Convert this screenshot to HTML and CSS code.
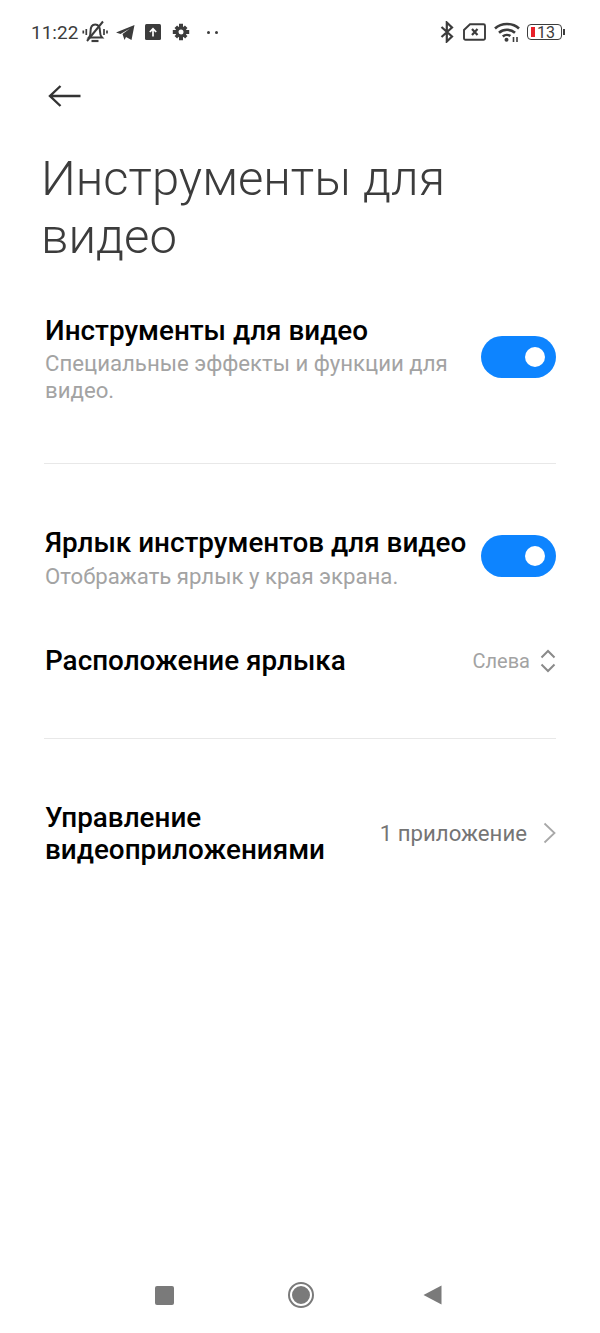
FILE: index.html
```html
<!DOCTYPE html>
<html lang="ru">
<head>
    <meta charset="UTF-8">
    <meta name="viewport" content="width=device-width, initial-scale=1.0">
    <title>Инструменты для видео</title>
    <link rel="stylesheet" href="styles.css">
</head>
<body>
    <div class="screen">
        <!-- Status bar -->
        <div class="status-bar">
            <div class="status-left">
                <span class="clock">11:22</span>
                <svg class="ic-bell" width="26" height="24" viewBox="0 0 26 24" fill="none" stroke="#3c3c3c" stroke-width="2">
                    <path d="M7 17.500c1.500-1.500 1.500-3.500 1.500-6 0-4.500 2-7 4.700-7s4.800 2.500 4.800 7c0 2.500.5 4.500 2 6z"/>
                    <path d="M9.500 21h7" stroke-width="2.200"/>
                    <path d="M5 21 21 1.500"/>
                    <path d="M4.300 9v6M1.300 10.500v3M22 9v6M25 10.500v3" stroke-width="1.700"/>
                </svg>
                <svg class="ic-telegram" width="19" height="15" viewBox="0 0 19 15">
                    <path d="M0 7.500 18.500 0 15.500 15 10 12l-1.500 3-2-6L14 3.500 4.500 9z" fill="#3c3c3c"/>
                </svg>
                <svg class="ic-upload" width="16" height="16" viewBox="0 0 16 16">
                    <rect width="16" height="16" rx="1.500" fill="#3c3c3c"/>
                    <path d="M8 12.500V5M4.800 8 8 4.800 11.200 8" fill="none" stroke="#fff" stroke-width="1.700"/>
                </svg>
                <svg class="ic-gear" width="18" height="18" viewBox="0 0 18 18">
                    <path d="M9 3.200a5.800 5.800 0 1 0 0 11.600A5.800 5.800 0 0 0 9 3.200zm0 3.300a2.500 2.500 0 1 1 0 5 2.500 2.500 0 0 1 0-5z" fill="#3c3c3c" fill-rule="evenodd"/>
                    <path d="M7 .8h4v3.500H7zM7 13.700h4v3.500H7zM.8 7h3.500v4H.8zM13.700 7h3.500v4h-3.500zM2.500 5.100l2.600-2.600 2 2-2.600 2.600zM10.900 13.100l2.200-2.200 2.400 2-2.400 2.600zM12.900 2.500l2.600 2.600-2 2-2.600-2.600zM4.900 10.900l2.200 2.200-2 2.400-2.600-2.400z" fill="#3c3c3c"/>
                </svg>
                <span class="dots"><i></i><i></i></span>
            </div>
            <div class="status-right">
                <svg class="ic-bt" width="14" height="22" viewBox="0 0 14 22" fill="none" stroke="#3c3c3c" stroke-width="2.200">
                    <path d="M1.500 6 12 15.500 6.800 20.500V1.500L12 6.500 1.500 16"/>
                </svg>
                <svg class="ic-sim" width="23" height="18" viewBox="0 0 23 18" fill="none" stroke="#3c3c3c">
                    <path d="M7 1.200h13.500a1.500 1.500 0 0 1 1.500 1.500v12.600a1.500 1.500 0 0 1-1.500 1.500H2.500A1.500 1.500 0 0 1 1 15.300V7z" stroke-width="1.900"/>
                    <path d="M9 6l5.500 6M14.500 6 9 12" stroke-width="2.200"/>
                </svg>
                <svg class="ic-wifi" width="26" height="20" viewBox="0 0 26 20" fill="none" stroke="#3c3c3c" stroke-width="2.600">
                    <path d="M1 6.500C7.500.5 18.500.5 25 6.500"/>
                    <path d="M5 10.800c4.500-4 11.500-4 16 0"/>
                    <path d="M8.800 14.500c2.300-2 5.600-2 7.600-.4"/>
                    <circle cx="12.500" cy="17.800" r="2" fill="#3c3c3c" stroke="none"/>
                    <path d="M19.500 20v-5M23 20v-5" stroke-width="1.600"/>
                </svg>
                <div class="battery">
                    <div class="battery-body"><i class="battery-level"></i><span>13</span></div>
                    <i class="battery-cap"></i>
                </div>
            </div>
        </div>

        <!-- Header -->
        <div class="back-row">
            <svg width="34" height="24" viewBox="0 0 34 24" fill="none" stroke="#333" stroke-width="2.400">
                <path d="M32.500 12H2.500M12.500 2 2 12l10.500 10"/>
            </svg>
        </div>
        <h1 class="page-title">Инструменты для видео</h1>

        <!-- Settings -->
        <div class="group group-first">
            <div class="row">
                <div class="row-text">
                    <div class="row-title">Инструменты для видео</div>
                    <div class="row-sub">Специальные эффекты и функции для видео.</div>
                </div>
                <div class="toggle"></div>
            </div>
        </div>
        <div class="divider divider-a"></div>

        <div class="group group-second">
            <div class="row">
                <div class="row-text">
                    <div class="row-title">Ярлык инструментов для видео</div>
                    <div class="row-sub">Отображать ярлык у края экрана.</div>
                </div>
                <div class="toggle"></div>
            </div>
            <div class="row row-picker">
                <div class="row-title">Расположение ярлыка</div>
                <div class="row-value">
                    <span class="value-light">Слева</span>
                    <svg width="16" height="24" viewBox="0 0 16 24" fill="none" stroke="#8a8a8a" stroke-width="2">
                        <path d="M1.500 8.500 8 2l6.500 6.500M1.500 15.500 8 22l6.500-6.500"/>
                    </svg>
                </div>
            </div>
        </div>
        <div class="divider divider-b"></div>

        <div class="group group-third">
            <div class="row">
                <div class="row-title row-title-wrap">Управление видеоприложениями</div>
                <div class="row-value row-value-app">
                    <span class="value-dark">1 приложение</span>
                    <svg width="13" height="22" viewBox="0 0 13 22" fill="none" stroke="#a8a8a8" stroke-width="1.800">
                        <path d="M1.500 1.500 11.500 11l-10 9.500"/>
                    </svg>
                </div>
            </div>
        </div>

        <!-- Navigation bar -->
        <div class="nav-bar">
            <div class="nav-square"></div>
            <div class="nav-home"></div>
            <svg width="19" height="20" viewBox="0 0 19 20"><path d="M.5 10 18.500.5v19z" fill="#7a7a7a"/></svg>
        </div>
    </div>
</body>
</html>
```

FILE: styles.css
```css
/* General */
body {
    margin: 0;
    background: #fff;
    font-family: Roboto, "Noto Sans", sans-serif;
    color: #000;
}

.screen {
    width: 600px;
    height: 1333px;
    display: flex;
    flex-direction: column;
    overflow: hidden;
}

/* Status bar */
.status-bar {
    height: 24px;
    margin-top: 20px;
    padding: 0 35px 0 31px;
    display: flex;
    justify-content: space-between;
    align-items: center;
}

.status-left,
.status-right {
    display: flex;
    align-items: center;
}

.clock {
    font-size: 19px;
    color: #3c3c3c;
    margin-right: 4px;
}

.ic-telegram { margin-left: 8px; }
.ic-upload { margin-left: 10px; }
.ic-gear { margin-left: 11px; }

.dots {
    display: flex;
    gap: 5px;
    margin-left: 17px;
}

.dots i {
    width: 3px;
    height: 3px;
    border-radius: 50%;
    background: #3c3c3c;
}

.ic-sim { margin-left: 9px; }
.ic-wifi { margin-left: 8px; }

.battery {
    display: flex;
    align-items: center;
    margin-left: 7px;
}

.battery-body {
    width: 30px;
    height: 14px;
    border: 1.500px solid #3c3c3c;
    border-radius: 4px;
    display: flex;
    align-items: center;
    padding-left: 3px;
    font-size: 16px;
    color: #3c3c3c;
}

.battery-level {
    width: 4px;
    height: 10px;
    background: #e8202a;
    margin-right: 2px;
}

.battery-cap {
    width: 2px;
    height: 6px;
    margin-left: 1px;
    background: #3c3c3c;
}

/* Header */
.back-row {
    margin-top: 40px;
    padding-left: 48px;
    height: 24px;
    display: flex;
}

.page-title {
    margin: 42px 0 0;
    padding: 0 100px 0 41px;
    font-size: 49px;
    font-weight: 300;
    line-height: 58px;
    color: #3c3c3c;
}

/* Rows */
.group {
    padding: 0 44px 0 45px;
}

.group-first { margin-top: 49px; }
.group-second { margin-top: 63px; }
.group-third { margin-top: 63px; }

.row {
    display: flex;
    justify-content: space-between;
    align-items: center;
}

.row-text {
    width: 425px;
}

.row-title {
    font-size: 27.85px;
    font-weight: 500;
    line-height: 32px;
    white-space: nowrap;
}

.row-title-wrap {
    width: 300px;
    white-space: normal;
}

.row-sub {
    font-size: 22.2px;
    line-height: 27px;
    color: #a3a3a3;
    margin-top: 3px;
}

.group-second .row-sub {
    margin-top: 4px;
}

.row-picker {
    margin-top: 55px;
}

.row-value {
    display: flex;
    align-items: center;
}

.row-value-app {
    margin-bottom: 2px;
}

.value-light {
    font-size: 20px;
    color: #a3a3a3;
    margin-right: 10px;
}

.value-dark {
    font-size: 22.2px;
    color: #757575;
    margin-right: 16px;
}

.toggle {
    width: 75px;
    height: 42px;
    margin-bottom: 6px;
    border-radius: 21px;
    background: #0d84ff;
    position: relative;
    flex-shrink: 0;
}

.group-second .toggle {
    margin-bottom: 5px;
}

/* knob sits over the track */
.toggle::after {
    content: "";
    position: absolute;
    right: 11px;
    top: 11px;
    width: 20px;
    height: 20px;
    border-radius: 50%;
    background: #fff;
}

.divider {
    height: 1px;
    margin: 0 44px;
    background: #e8e8e8;
}

.divider-a { margin-top: 59px; }
.divider-b { margin-top: 61px; }

/* Navigation bar */
.nav-bar {
    margin-top: auto;
    margin-bottom: 27px;
    padding: 0 158px 0 155px;
    display: flex;
    justify-content: space-between;
    align-items: center;
}

.nav-square {
    width: 19px;
    height: 19px;
    border-radius: 2px;
    background: #7a7a7a;
}

.nav-home {
    width: 18px;
    height: 18px;
    margin-left: 4px;
    border-radius: 50%;
    background: #7a7a7a;
    border: 2px solid #fff;
    outline: 2.500px solid #7a7a7a;
}
```
